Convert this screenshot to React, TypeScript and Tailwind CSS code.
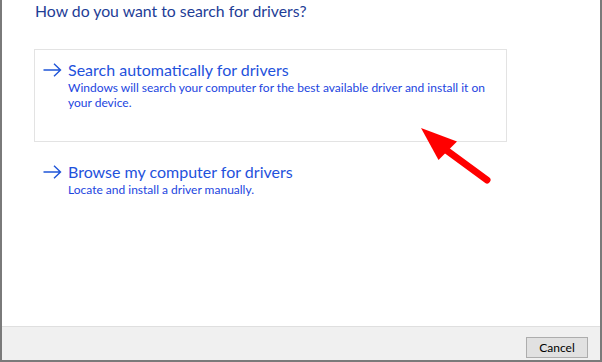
import React from 'react'

const font = "font-['Segoe_UI','Lato',sans-serif]"

function LinkArrow() {
  return (
    <svg width="19" height="14" viewBox="0 0 19 14" className="shrink-0 mt-[4px]">
      <path d="M0.5 7 H17.5 M11 0.8 L17.5 7 L11 13.2" fill="none" stroke="#1f55d8" strokeWidth="1.4" />
    </svg>
  )
}

function CommandLink({ title, desc, boxed }: { title: string; desc: React.ReactNode; boxed?: boolean }) {
  return (
    <div
      className={`w-[473px] flex items-start gap-[6px] pl-[8px] pt-[9px] border ${
        boxed ? 'border-[#e3e3e3] h-[93px]' : 'border-transparent'
      }`}
    >
      <LinkArrow />
      <div className="flex flex-col whitespace-nowrap">
        <span className="text-[16px] leading-[21px] text-[#1f52dc]">{title}</span>
        <span className="text-[12px] leading-[15px] text-[#1c45e0]">{desc}</span>
      </div>
    </div>
  )
}

export default function App() {
  return (
    <div className={`relative w-[602px] h-[362px] flex flex-col bg-white border-x-2 border-b-2 border-[#7a7a7a] ${font}`}>
      <div className="flex-1 pl-[32px]">
        <h1 className="text-[15.8px] leading-[22px] text-[#1e3d96] pl-[1px]">How do you want to search for drivers?</h1>
        <div className="mt-[27px] flex flex-col gap-[9px]">
          <CommandLink
            boxed
            title="Search automatically for drivers"
            desc={<>Windows will search your computer for the best available driver and install it on<br />your device.</>}
          />
          <CommandLink title="Browse my computer for drivers" desc="Locate and install a driver manually." />
        </div>
      </div>

      <div className="h-[34px] border-t border-[#dfdfdf] bg-[#f0f0f0] flex justify-end items-start pt-[10px] pr-[12px]">
        <button className="w-[62px] h-[21px] border border-[#adadad] bg-[#e1e1e1] text-[12px] leading-[19px] text-black">
          Cancel
        </button>
      </div>

      {/* red annotation arrow */}
      <svg className="absolute left-[410px] top-[120px]" width="90" height="72" viewBox="410 120 90 72">
        <line x1="440" y1="147" x2="485" y2="180" stroke="#ff0000" strokeWidth="7" strokeLinecap="round" />
        <polygon points="419,128 455,141.5 436.5,160" fill="#ff0000" />
      </svg>
    </div>
  )
}
